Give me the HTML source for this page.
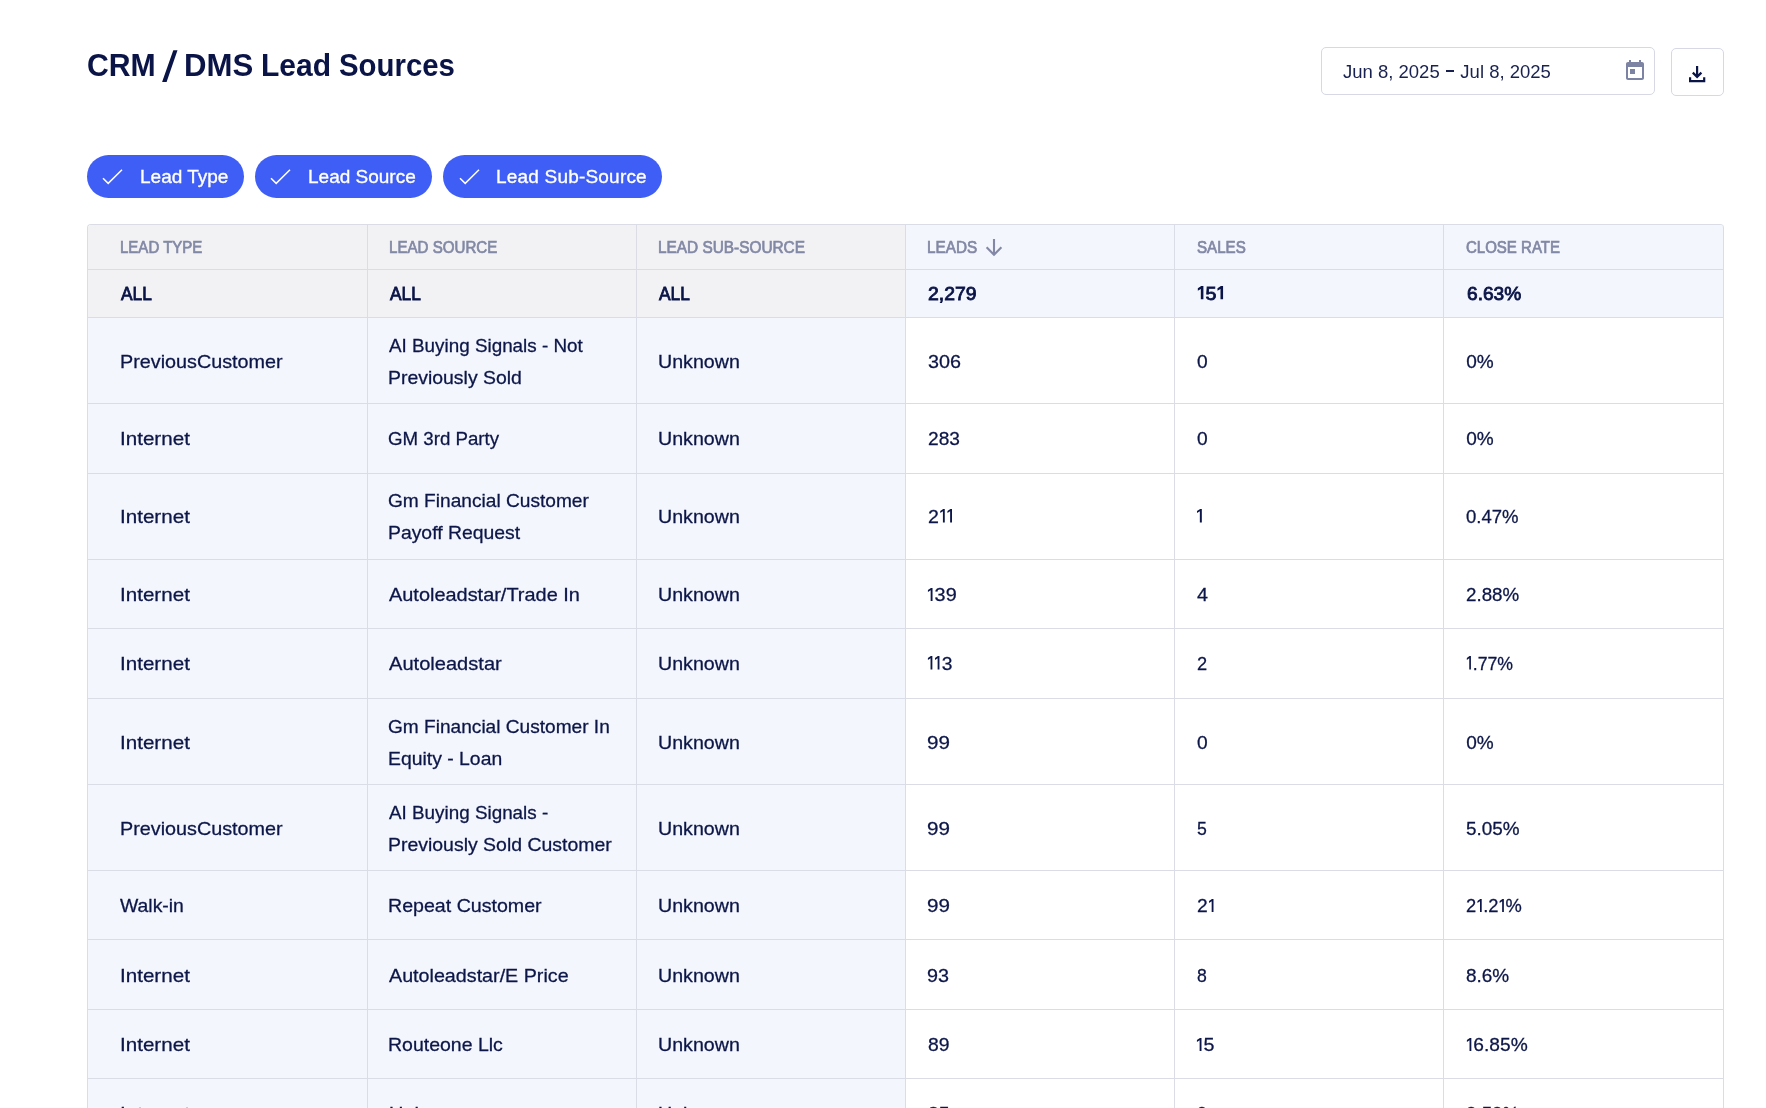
<!DOCTYPE html>
<html lang="en"><head><meta charset="utf-8"><title>CRM / DMS Lead Sources</title>
<style>
*{box-sizing:border-box}
html,body{margin:0;padding:0;background:#fff}
body{width:1766px;height:1108px;overflow:hidden}
#page{will-change:transform;width:1766px;height:1108px;overflow:hidden;position:relative;background:#fff;font-family:"Liberation Sans",sans-serif;color:#0c1648}
.title{position:absolute;left:87px;top:41px;margin:0;width:380px;height:48px;font-size:32px;line-height:48px;font-weight:700;color:#0a1447;white-space:nowrap}
.title span{position:absolute;top:0;transform-origin:left center}
.date{position:absolute;left:1321px;top:47px;width:334px;height:48px;border:1px solid #d6d8e4;border-radius:5px;background:#fff}
.date span{position:absolute;left:21px;top:0;line-height:47px;font-size:18.5px;color:#18214f;white-space:nowrap}
.date i{display:inline-block;width:8px;height:1.6px;background:#18214f;vertical-align:6px;margin:0 .8px 0 1.6px}
.date svg{position:absolute;left:301px;top:11px}
.dl{position:absolute;left:1671px;top:48px;width:53px;height:48px;border:1px solid #d6d8e4;border-radius:5px;background:#fff}
.dl svg{position:absolute;left:0;top:0}
.chip{position:absolute;top:155px;height:43px;border-radius:22px;background:#3f5ef5;color:#fff;font-size:19px;line-height:43px;white-space:nowrap}
.chip svg{position:absolute;left:14px;top:13px}
.chip span{position:absolute;left:53px;top:0;-webkit-text-stroke:.35px #fff}
table.grid{position:absolute;left:87px;top:224px;width:1637px;border-collapse:separate;border-spacing:0;table-layout:fixed;border-top:1px solid #dadde6;border-left:1px solid #dadde6;border-radius:4px 4px 0 0}
th,td{color:#0c1648;font-family:"Liberation Sans",sans-serif;font-style:normal;border-right:1px solid #dadde6;border-bottom:1px solid #dadde6;padding:0;text-align:left;vertical-align:middle;font-size:19px;line-height:32px;font-weight:400;background:#fff;white-space:nowrap;overflow:hidden}
th:first-child{border-top-left-radius:3px}
th:last-child{border-top-right-radius:3px}
.g{background:#f2f2f5}
.b{background:#f3f6fd}
th{color:#8288a5;font-weight:400;font-size:16.5px;line-height:20px}
th .s{-webkit-text-stroke:.7px currentColor}
th svg.sort{vertical-align:middle;margin-left:3.6px;position:relative;top:0px}
.all td{font-weight:400;color:#0a1447}
.s{display:inline-block;transform-origin:left center;vertical-align:middle}
td .s{vertical-align:baseline;-webkit-text-stroke:.28px currentColor}
.all td .s{-webkit-text-stroke:.85px currentColor}
.o{display:inline-block;vertical-align:baseline;fill:currentColor}
</style></head>
<body>
<div id="page">
<h1 class="title"><span style="left:0.26px;transform:scaleX(.9429)">CRM</span><svg width="20" height="36" viewBox="0 0 20 36" style="position:absolute;left:74px;top:8px"><path d="M12.3 1.2h4.2L5.6 32.9H1.1z" fill="#0a1447"/></svg><span style="left:96.95px;transform:scaleX(.9735)">DMS</span><span style="left:173.82px;transform:scaleX(.938)">Lead</span><span style="left:252.08px;transform:scaleX(.9177)">Sources</span></h1>
<div class="date"><span>Jun 8, 2025 <i></i> Jul 8, 2025</span>
<svg width="24" height="24" viewBox="0 0 24 24"><path fill="#7d83a3" d="M19 3h-1V1h-2v2H8V1H6v2H5c-1.11 0-1.99.9-1.99 2L3 19c0 1.1.89 2 2 2h14c1.1 0 2-.9 2-2V5c0-1.1-.9-2-2-2zm0 16H5V8h14v11zM7 10h5v5H7z"/></svg></div>
<div class="dl"><svg width="51" height="46" viewBox="0 0 51 46"><path d="M25.1 17v11.5M20.8 23.6l4.3 4.3 4.3-4.3M18.1 28.3v3.8h14.1v-3.8" fill="none" stroke="#0a1447" stroke-width="2.2"/></svg></div>
<div class="chip" style="left:87px;width:157px"><svg width="24" height="18" viewBox="0 0 24 18"><path d="M2 10.2 7.2 15.4 21 1.8" fill="none" stroke="#fff" stroke-width="1.5"/></svg><span>Lead Type</span></div>
<div class="chip" style="left:255px;width:177px"><svg width="24" height="18" viewBox="0 0 24 18"><path d="M2 10.2 7.2 15.4 21 1.8" fill="none" stroke="#fff" stroke-width="1.5"/></svg><span>Lead Source</span></div>
<div class="chip" style="left:443px;width:219px"><svg width="24" height="18" viewBox="0 0 24 18" style="left:15px"><path d="M2 10.2 7.2 15.4 21 1.8" fill="none" stroke="#fff" stroke-width="1.5"/></svg><span style="letter-spacing:.2px">Lead Sub-Source</span></div>
<table class="grid">
<colgroup><col style="width:280px"><col style="width:269px"><col style="width:269px"><col style="width:269px"><col style="width:269px"><col style="width:280px"></colgroup>
<thead><tr style="height:45px"><th class="g">&#8203;<span class="s" style="margin-left:31.59px;transform:translateY(-1px) scaleX(0.9101)">LEAD TYPE</span></th><th class="g">&#8203;<span class="s" style="margin-left:20.58px;transform:translateY(-1px) scaleX(0.9154)">LEAD SOURCE</span></th><th class="g">&#8203;<span class="s" style="margin-left:20.57px;transform:translateY(-1px) scaleX(0.9318)">LEAD SUB-SOURCE</span></th><th class="b">&#8203;<span class="s" style="margin-left:20.97px;transform:translateY(-1px) scaleX(0.9264)">LEADS</span><svg class="sort" width="18" height="19" viewBox="0 0 18 19"><path d="M9 1v16M1.6 9.3 9 16.8l7.4-7.5" fill="none" stroke="#8288a5" stroke-width="2.1"/></svg></th><th class="b">&#8203;<span class="s" style="margin-left:21.9px;transform:translateY(-1px) scaleX(0.9170)">SALES</span></th><th class="b">&#8203;<span class="s" style="margin-left:21.7px;transform:translateY(-1px) scaleX(0.9097)">CLOSE RATE</span></th></tr>
<tr class="all" style="height:48px"><td class="g">&#8203;<span class="s" style="margin-left:33.01px;transform:scaleX(0.9114)">ALL</span></td><td class="g">&#8203;<span class="s" style="margin-left:21.91px;transform:scaleX(0.9114)">ALL</span></td><td class="g">&#8203;<span class="s" style="margin-left:21.91px;transform:scaleX(0.9114)">ALL</span></td><td class="b">&#8203;<span class="s" style="margin-left:21.8px;transform:scaleX(1.0191)">2,279</span></td><td class="b">&#8203;<span class="s" style="margin-left:21.5px;transform:scaleX(1.0350)"><svg class="o" width="8.2" height="13.2" viewBox="0 0 8.2 13.2"><path d="M6.2 0H4.1L.8 2.3v2.5l2.9-1.9v10.3h2.5z"/></svg>5<svg class="o" width="8.2" height="13.2" viewBox="0 0 8.2 13.2"><path d="M6.2 0H4.1L.8 2.3v2.5l2.9-1.9v10.3h2.5z"/></svg></span></td><td class="b">&#8203;<span class="s" style="margin-left:22.5px;transform:scaleX(1.0056)">6.63%</span></td></tr></thead>
<tbody>
<tr style="height:86px"><td class="b">&#8203;<span class="s" style="margin-left:31.56px;transform:translateY(1px) scaleX(1.0406)">PreviousCustomer</span></td><td class="b"><span class="s" style="margin-left:21.3px;transform:translateY(1px) scaleX(0.9918);display:block">AI Buying Signals - Not</span><span class="s" style="margin-left:20.28px;transform:translateY(1px) scaleX(1.0225);display:block">Previously Sold</span></td><td class="b">&#8203;<span class="s" style="margin-left:20.67px;transform:translateY(1px) scaleX(1.0333)">Unknown</span></td><td>&#8203;<span class="s" style="margin-left:21.5px;transform:translateY(1px) scaleX(1.0387)">306</span></td><td>&#8203;<span class="s" style="margin-left:21.9px;transform:translateY(1px) scaleX(1.0100)">0</span></td><td>&#8203;<span class="s" style="margin-left:22.2px;transform:translateY(1px) scaleX(1.0000)">0%</span></td></tr>
<tr style="height:70px"><td class="b">&#8203;<span class="s" style="margin-left:31.52px;transform:scaleX(1.0844)">Internet</span></td><td class="b">&#8203;<span class="s" style="margin-left:20.32px;transform:scaleX(0.9830)">GM 3rd Party</span></td><td class="b">&#8203;<span class="s" style="margin-left:20.67px;transform:scaleX(1.0333)">Unknown</span></td><td>&#8203;<span class="s" style="margin-left:21.5px;transform:scaleX(1.0065)">283</span></td><td>&#8203;<span class="s" style="margin-left:21.9px;transform:scaleX(1.0100)">0</span></td><td>&#8203;<span class="s" style="margin-left:22.2px;transform:scaleX(1.0000)">0%</span></td></tr>
<tr style="height:86px"><td class="b">&#8203;<span class="s" style="margin-left:31.52px;transform:scaleX(1.0844)">Internet</span></td><td class="b"><span class="s" style="margin-left:20.09px;transform:scaleX(1.0065);display:block">Gm Financial Customer</span><span class="s" style="margin-left:20.08px;transform:scaleX(1.0194);display:block">Payoff Request</span></td><td class="b">&#8203;<span class="s" style="margin-left:20.67px;transform:scaleX(1.0333)">Unknown</span></td><td>&#8203;<span class="s" style="margin-left:21.5px;transform:scaleX(1.0292)">2<svg class="o" width="7.3" height="13.4" viewBox="0 0 7.3 13.4"><path d="M5.3 0H3.8L.9 2.1v1.9l2.6-1.8v11.2h1.8z"/></svg><svg class="o" width="7.3" height="13.4" viewBox="0 0 7.3 13.4"><path d="M5.3 0H3.8L.9 2.1v1.9l2.6-1.8v11.2h1.8z"/></svg></span></td><td>&#8203;<span class="s" style="margin-left:21.4px;transform:scaleX(1.1000)"><svg class="o" width="7.3" height="13.4" viewBox="0 0 7.3 13.4"><path d="M5.3 0H3.8L.9 2.1v1.9l2.6-1.8v11.2h1.8z"/></svg></span></td><td>&#8203;<span class="s" style="margin-left:22.2px;transform:scaleX(0.9759)">0.47%</span></td></tr>
<tr style="height:69px"><td class="b">&#8203;<span class="s" style="margin-left:31.52px;transform:translateY(1px) scaleX(1.0844)">Internet</span></td><td class="b">&#8203;<span class="s" style="margin-left:21.3px;transform:translateY(1px) scaleX(1.0486)">Autoleadstar/Trade In</span></td><td class="b">&#8203;<span class="s" style="margin-left:20.67px;transform:translateY(1px) scaleX(1.0333)">Unknown</span></td><td>&#8203;<span class="s" style="margin-left:20.86px;transform:translateY(1px) scaleX(1.0444)"><svg class="o" width="7.3" height="13.4" viewBox="0 0 7.3 13.4"><path d="M5.3 0H3.8L.9 2.1v1.9l2.6-1.8v11.2h1.8z"/></svg>39</span></td><td>&#8203;<span class="s" style="margin-left:21.6px;transform:translateY(1px) scaleX(1.0400)">4</span></td><td>&#8203;<span class="s" style="margin-left:22.2px;transform:translateY(1px) scaleX(0.9870)">2.88%</span></td></tr>
<tr style="height:70px"><td class="b">&#8203;<span class="s" style="margin-left:31.52px;transform:scaleX(1.0844)">Internet</span></td><td class="b">&#8203;<span class="s" style="margin-left:21.1px;transform:scaleX(1.0570)">Autoleadstar</span></td><td class="b">&#8203;<span class="s" style="margin-left:20.67px;transform:scaleX(1.0333)">Unknown</span></td><td>&#8203;<span class="s" style="margin-left:20.89px;transform:scaleX(1.0125)"><svg class="o" width="7.3" height="13.4" viewBox="0 0 7.3 13.4"><path d="M5.3 0H3.8L.9 2.1v1.9l2.6-1.8v11.2h1.8z"/></svg><svg class="o" width="7.3" height="13.4" viewBox="0 0 7.3 13.4"><path d="M5.3 0H3.8L.9 2.1v1.9l2.6-1.8v11.2h1.8z"/></svg>3</span></td><td>&#8203;<span class="s" style="margin-left:22.0px;transform:scaleX(0.9600)">2</span></td><td>&#8203;<span class="s" style="margin-left:21.87px;transform:scaleX(0.9306)"><svg class="o" width="7.3" height="13.4" viewBox="0 0 7.3 13.4"><path d="M5.3 0H3.8L.9 2.1v1.9l2.6-1.8v11.2h1.8z"/></svg>.77%</span></td></tr>
<tr style="height:86px"><td class="b">&#8203;<span class="s" style="margin-left:31.52px;transform:translateY(0.5px) scaleX(1.0844)">Internet</span></td><td class="b"><span class="s" style="margin-left:20.09px;transform:translateY(0.5px) scaleX(1.0050);display:block">Gm Financial Customer In</span><span class="s" style="margin-left:20.28px;transform:translateY(0.5px) scaleX(1.0200);display:block">Equity - Loan</span></td><td class="b">&#8203;<span class="s" style="margin-left:20.67px;transform:translateY(0.5px) scaleX(1.0333)">Unknown</span></td><td>&#8203;<span class="s" style="margin-left:20.81px;transform:translateY(0.5px) scaleX(1.0850)">99</span></td><td>&#8203;<span class="s" style="margin-left:21.9px;transform:translateY(0.5px) scaleX(1.0100)">0</span></td><td>&#8203;<span class="s" style="margin-left:22.2px;transform:translateY(0.5px) scaleX(1.0000)">0%</span></td></tr>
<tr style="height:86px"><td class="b">&#8203;<span class="s" style="margin-left:31.56px;transform:translateY(0.5px) scaleX(1.0406)">PreviousCustomer</span></td><td class="b"><span class="s" style="margin-left:21.1px;transform:translateY(0.5px) scaleX(0.9919);display:block">AI Buying Signals -</span><span class="s" style="margin-left:20.08px;transform:translateY(0.5px) scaleX(1.0234);display:block">Previously Sold Customer</span></td><td class="b">&#8203;<span class="s" style="margin-left:20.67px;transform:translateY(0.5px) scaleX(1.0333)">Unknown</span></td><td>&#8203;<span class="s" style="margin-left:20.81px;transform:translateY(0.5px) scaleX(1.0850)">99</span></td><td>&#8203;<span class="s" style="margin-left:22.0px;transform:translateY(0.5px) scaleX(0.9300)">5</span></td><td>&#8203;<span class="s" style="margin-left:22.2px;transform:translateY(0.5px) scaleX(0.9944)">5.05%</span></td></tr>
<tr style="height:69px"><td class="b">&#8203;<span class="s" style="margin-left:32.3px;transform:translateY(1px) scaleX(1.0194)">Walk-in</span></td><td class="b">&#8203;<span class="s" style="margin-left:20.27px;transform:translateY(1px) scaleX(1.0318)">Repeat Customer</span></td><td class="b">&#8203;<span class="s" style="margin-left:20.67px;transform:translateY(1px) scaleX(1.0333)">Unknown</span></td><td>&#8203;<span class="s" style="margin-left:20.81px;transform:translateY(1px) scaleX(1.0850)">99</span></td><td>&#8203;<span class="s" style="margin-left:21.9px;transform:translateY(1px) scaleX(1.0118)">2<svg class="o" width="7.3" height="13.4" viewBox="0 0 7.3 13.4"><path d="M5.3 0H3.8L.9 2.1v1.9l2.6-1.8v11.2h1.8z"/></svg></span></td><td>&#8203;<span class="s" style="margin-left:22.2px;transform:translateY(1px) scaleX(0.9638)">2<svg class="o" width="7.3" height="13.4" viewBox="0 0 7.3 13.4"><path d="M5.3 0H3.8L.9 2.1v1.9l2.6-1.8v11.2h1.8z"/></svg>.2<svg class="o" width="7.3" height="13.4" viewBox="0 0 7.3 13.4"><path d="M5.3 0H3.8L.9 2.1v1.9l2.6-1.8v11.2h1.8z"/></svg>%</span></td></tr>
<tr style="height:70px"><td class="b">&#8203;<span class="s" style="margin-left:31.52px;transform:translateY(1px) scaleX(1.0844)">Internet</span></td><td class="b">&#8203;<span class="s" style="margin-left:21.1px;transform:translateY(1px) scaleX(1.0370)">Autoleadstar/E Price</span></td><td class="b">&#8203;<span class="s" style="margin-left:20.67px;transform:translateY(1px) scaleX(1.0333)">Unknown</span></td><td>&#8203;<span class="s" style="margin-left:20.86px;transform:translateY(1px) scaleX(1.0400)">93</span></td><td>&#8203;<span class="s" style="margin-left:22.0px;transform:translateY(1px) scaleX(0.9300)">8</span></td><td>&#8203;<span class="s" style="margin-left:22.2px;transform:translateY(1px) scaleX(0.9977)">8.6%</span></td></tr>
<tr style="height:69px"><td class="b">&#8203;<span class="s" style="margin-left:31.52px;transform:translateY(1px) scaleX(1.0844)">Internet</span></td><td class="b">&#8203;<span class="s" style="margin-left:20.07px;transform:translateY(1px) scaleX(1.0252)">Routeone Llc</span></td><td class="b">&#8203;<span class="s" style="margin-left:20.67px;transform:translateY(1px) scaleX(1.0333)">Unknown</span></td><td>&#8203;<span class="s" style="margin-left:21.9px;transform:translateY(1px) scaleX(1.0190)">89</span></td><td>&#8203;<span class="s" style="margin-left:21.46px;transform:translateY(1px) scaleX(1.0375)"><svg class="o" width="7.3" height="13.4" viewBox="0 0 7.3 13.4"><path d="M5.3 0H3.8L.9 2.1v1.9l2.6-1.8v11.2h1.8z"/></svg>5</span></td><td>&#8203;<span class="s" style="margin-left:21.79px;transform:translateY(1px) scaleX(1.0083)"><svg class="o" width="7.3" height="13.4" viewBox="0 0 7.3 13.4"><path d="M5.3 0H3.8L.9 2.1v1.9l2.6-1.8v11.2h1.8z"/></svg>6.85%</span></td></tr>
<tr style="height:70px"><td class="b">&#8203;<span class="s" style="margin-left:31.52px;transform:translateY(-0.5px) scaleX(1.0844)">Internet</span></td><td class="b">&#8203;<span class="s" style="margin-left:20.65px;transform:translateY(-0.5px) scaleX(1.0468)">Unknown</span></td><td class="b">&#8203;<span class="s" style="margin-left:20.67px;transform:translateY(-0.5px) scaleX(1.0333)">Unknown</span></td><td>&#8203;<span class="s" style="margin-left:21.9px;transform:translateY(-0.5px) scaleX(1.0190)">85</span></td><td>&#8203;<span class="s" style="margin-left:22.0px;transform:translateY(-0.5px) scaleX(0.9300)">3</span></td><td>&#8203;<span class="s" style="margin-left:22.2px;transform:translateY(-0.5px) scaleX(0.9870)">3.53%</span></td></tr>
</tbody></table>
</div>
</body></html>
